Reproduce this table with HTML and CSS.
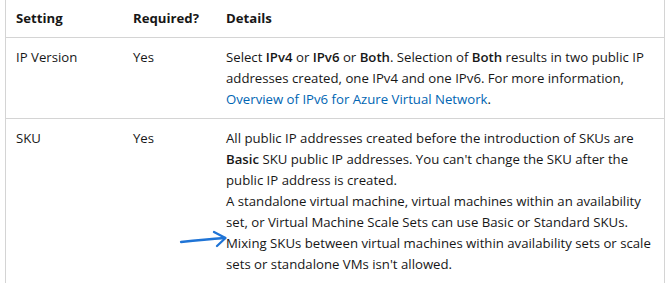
FILE: index.html
```html
<!DOCTYPE html>
<html>
<head>
<meta charset="utf-8">
<link rel="stylesheet" href="styles.css">
</head>
<body>
<div class="wrap">
<table class="settings">
  <thead>
    <tr><th class="c1">Setting</th><th class="c2">Required?</th><th class="c3">Details</th></tr>
  </thead>
  <tbody>
    <tr>
      <td>IP Version</td>
      <td>Yes</td>
      <td class="details">Select <b>IPv4</b> or <b>IPv6</b> or <b>Both</b>. Selection of <b>Both</b> results in two public IP addresses created, one IPv4 and one IPv6. For more information, <a href="#">Overview of IPv6 for Azure Virtual Network</a>.</td>
    </tr>
    <tr>
      <td>SKU</td>
      <td>Yes</td>
      <td class="details">All public IP addresses created before the introduction of SKUs are <b>Basic</b> SKU public IP addresses. You can't change the SKU after the public IP address is created.<br>A standalone virtual machine, virtual machines within an availability set, or Virtual Machine Scale Sets can use Basic or Standard SKUs.<br>Mixing SKUs between virtual machines within availability sets or scale sets or standalone VMs isn't allowed.</td>
    </tr>
  </tbody>
</table>
<svg class="arrow" width="60" height="24" viewBox="0 0 60 24">
  <path d="M2 13 C 16 11.5, 32 10, 46 9" fill="none" stroke="#1f74d6" stroke-width="2.3" stroke-linecap="round"/>
  <path d="M35 3 L 46.5 9 L 38 17" fill="none" stroke="#1f74d6" stroke-width="2.3" stroke-linecap="round" stroke-linejoin="round"/>
</svg>
</div>
</body>
</html>
```

FILE: styles.css
```css
html, body {
  margin: 0;
  padding: 0;
  background: #ffffff;
}
body {
  font-family: "Open Sans", "Noto Sans", sans-serif;
  font-size: 13.2px;
  color: #171717;
}
.wrap {
  position: relative;
  padding-left: 5px;
}
.settings {
  border-collapse: collapse;
  width: 660px;
  table-layout: fixed;
  border-left: 1px solid #d4d4d4;
  border-right: 1px solid #d4d4d4;
}
.settings th {
  text-align: left;
  font-weight: 700;
  padding: 8px 10px 8px 10px;
  line-height: 21px;
  height: 21px;
  border-bottom: 1px solid #d4d4d4;
}
.settings td {
  vertical-align: top;
  padding: 9px 10px 8px 10px;
  line-height: 21px;
  border-bottom: 1px solid #d4d4d4;
}
.settings td.details {
  padding-right: 4px;
}
.settings tbody tr:last-child td {
  border-bottom: none;
}
.c1 { width: 97px; }
.c2 { width: 73px; }
.c3 { width: auto; }
b { font-weight: 600; }
a {
  color: #0065b3;
  text-decoration: none;
}
.arrow {
  position: absolute;
  left: 179px;
  top: 229px;
}
```
